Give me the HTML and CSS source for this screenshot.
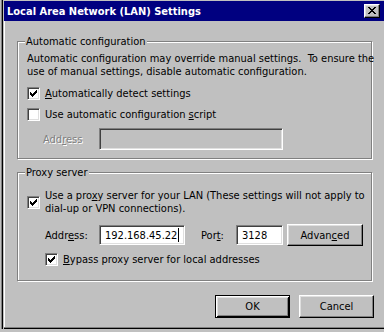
FILE: index.html
```html
<!DOCTYPE html>
<html lang="en">
<head>
    <meta charset="UTF-8">
    <title>Local Area Network (LAN) Settings</title>
    <link rel="stylesheet" href="styles.css">
</head>
<body>
    <div class="window">
        <div class="titlebar">
            <span class="title">Local Area Network (LAN) Settings</span>
            <span class="close-btn">
                <svg width="8" height="7" viewBox="0 0 8 7" shape-rendering="crispEdges"><path d="M0 0h2v1H0z M6 0h2v1H6z M1 1h2v1H1z M5 1h2v1H5z M2 2h4v1H2z M3 3h2v1H3z M2 4h4v1H2z M1 5h2v1H1z M5 5h2v1H5z M0 6h2v1H0z M6 6h2v1H6z" fill="#000"/></svg>
            </span>
        </div>

        <div class="client">
            <div class="group group-auto">
                <div class="group-title">Automatic configuration</div>
                <p class="note">Automatic configuration may override manual settings.&nbsp; To ensure the<br>use of manual settings, disable automatic configuration.</p>

                <div class="check-row row-detect">
                    <span class="checkbox"><svg width="7" height="7" viewBox="0 0 7 7" shape-rendering="crispEdges"><path d="M0 2h1v3H0z M1 3h1v3H1z M2 4h1v3H2z M3 3h1v3H3z M4 2h1v3H4z M5 1h1v3H5z M6 0h1v3H6z" fill="#000"/></svg></span>
                    <span><u>A</u>utomatically detect settings</span>
                </div>
                <div class="check-row row-script">
                    <span class="checkbox"></span>
                    <span>Use automatic configuration <u>s</u>cript</span>
                </div>
                <div class="field-row row-script-addr">
                    <span class="field-label disabled">Add<u>r</u>ess</span>
                    <span class="textbox textbox-disabled"></span>
                </div>
            </div>

            <div class="group group-proxy">
                <div class="group-title">Proxy server</div>

                <div class="check-row row-proxy">
                    <span class="checkbox"><svg width="7" height="7" viewBox="0 0 7 7" shape-rendering="crispEdges"><path d="M0 2h1v3H0z M1 3h1v3H1z M2 4h1v3H2z M3 3h1v3H3z M4 2h1v3H4z M5 1h1v3H5z M6 0h1v3H6z" fill="#000"/></svg></span>
                    <span>Use a pro<u>x</u>y server for your LAN (These settings will not apply to<br>dial-up or VPN connections).</span>
                </div>
                <div class="field-row row-proxy-addr">
                    <span class="field-label addr-label">Addr<u>e</u>ss:</span>
                    <span class="textbox textbox-addr">192.168.45.22<span class="caret"></span></span>
                    <span class="field-label port-label">Por<u>t</u>:</span>
                    <span class="textbox textbox-port">3128</span>
                    <span class="btn btn-advanced">Advan<u>c</u>ed</span>
                </div>
                <div class="check-row row-bypass">
                    <span class="checkbox"><svg width="7" height="7" viewBox="0 0 7 7" shape-rendering="crispEdges"><path d="M0 2h1v3H0z M1 3h1v3H1z M2 4h1v3H2z M3 3h1v3H3z M4 2h1v3H4z M5 1h1v3H5z M6 0h1v3H6z" fill="#000"/></svg></span>
                    <span><u>B</u>ypass proxy server for local addresses</span>
                </div>
            </div>

            <div class="buttons">
                <span class="btn btn-default">OK</span>
                <span class="btn">Cancel</span>
            </div>
        </div>
    </div>
</body>
</html>
```

FILE: styles.css
```css
body {
    margin: 0;
    background: #c0c0c0;
    font-family: "DejaVu Sans", sans-serif;
    font-stretch: condensed;
    font-size: 11px;
    line-height: 13px;
    color: #000;
    overflow: hidden;
}
.window {
    width: 384px;
    height: 329px;
    box-sizing: border-box;
    padding-left: 4px;
    padding-bottom: 2px;
    display: flex;
    flex-direction: column;
    box-shadow: inset 1px 0 #c0c0c0, inset 2px 0 #808080, inset 3px 0 #000, inset 4px 0 #c0c0c0,
                inset 0 -1px #000, inset 0 -2px #808080;
}
.titlebar {
    margin-top: 1px;
    height: 20px;
    background: #000080;
    color: #fff;
    font-weight: bold;
    display: flex;
    align-items: center;
    justify-content: space-between;
    padding: 0 4px 0 3px;
}
.close-btn {
    width: 16px;
    height: 14px;
    box-sizing: border-box;
    background: #c0c0c0;
    border: 1px solid;
    border-color: #fff #000 #000 #fff;
    box-shadow: inset -1px -1px #808080, inset 1px 1px #dfdfdf;
    display: flex;
    align-items: center;
    justify-content: center;
    padding-bottom: 1px;
}
.client {
    flex: 1;
    border-left: 1px solid #fff;
    padding: 20px 0 0 12px;
}
.group {
    width: 355px;
    box-sizing: border-box;
    border: 1px solid #808080;
    box-shadow: inset 1px 1px #fff, 1px 1px #fff;
    padding-left: 9px;
}
.group-auto {
    height: 118px;
}
.group-proxy {
    height: 109px;
    margin-top: 13px;
}
.group-title {
    width: max-content;
    margin: -7px 0 0 -2px;
    padding: 0 1px;
    background: #c0c0c0;
}
.note {
    margin: 4px 0 0;
    white-space: nowrap;
}
.check-row {
    display: flex;
    align-items: center;
    gap: 5px;
    white-space: nowrap;
}
.row-detect { margin-top: 9px; }
.row-script { margin-top: 8px; }
.row-proxy { margin-top: 10px; }
.row-bypass { margin: 7px 0 0 18px; }
.checkbox {
    flex: none;
    width: 13px;
    height: 13px;
    box-sizing: border-box;
    background: #fff;
    border: 1px solid;
    border-color: #808080 #fff #fff #808080;
    box-shadow: inset 1px 1px #404040, inset -1px -1px #dfdfdf;
    display: flex;
    align-items: center;
    justify-content: center;
}
.field-row {
    display: flex;
    align-items: center;
    white-space: nowrap;
}
.row-script-addr { margin-top: 7px; }
.row-proxy-addr { margin-top: 9px; }
.field-label {
    flex: none;
}
.disabled {
    color: #808080;
    text-shadow: 1px 1px #fff;
    margin-left: 16px;
    width: 56px;
}
.addr-label {
    margin-left: 18px;
    width: 54px;
}
.port-label {
    margin-left: 16px;
    width: 35px;
}
.textbox {
    flex: none;
    box-sizing: border-box;
    height: 20px;
    background: #fff;
    border: 1px solid;
    border-color: #808080 #fff #fff #808080;
    box-shadow: inset 1px 1px #404040, inset -1px -1px #dfdfdf;
    padding: 0 5px;
    display: flex;
    align-items: center;
}
.textbox-disabled {
    width: 184px;
    height: 22px;
    background: #c0c0c0;
}
.textbox-addr {
    width: 86px;
}
.textbox-port {
    width: 47px;
}
.caret {
    width: 1px;
    height: 14px;
    margin-left: 1px;
    background: #000;
}
.btn {
    flex: none;
    box-sizing: border-box;
    width: 75px;
    height: 23px;
    background: #c0c0c0;
    border: 1px solid;
    border-color: #fff #000 #000 #fff;
    box-shadow: inset -1px -1px #808080, inset 1px 1px #dfdfdf;
    display: flex;
    align-items: center;
    justify-content: center;
}
.btn-advanced {
    width: 76px;
    height: 22px;
    margin-left: 4px;
}
.btn-default {
    border-color: #000;
    box-shadow: inset 1px 1px #fff, inset -1px -1px #000, inset 2px 2px #dfdfdf, inset -2px -2px #808080;
}
.buttons {
    display: flex;
    gap: 9px;
    margin-top: 14px;
    padding-left: 198px;
}
```
